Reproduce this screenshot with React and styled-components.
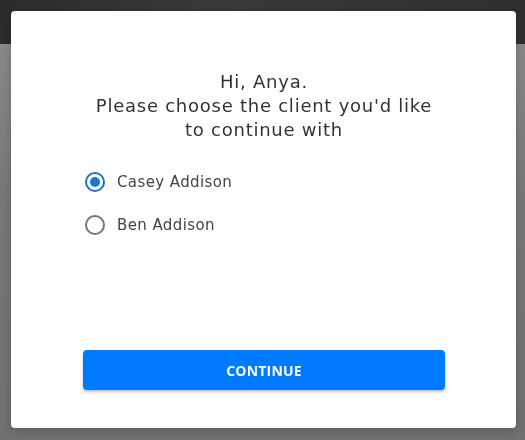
import React, { useState } from 'react';
import styled, { createGlobalStyle } from 'styled-components';

const GlobalStyle = createGlobalStyle`
  html, body {
    margin: 0;
    padding: 0;
    height: 100%;
  }

  body {
    font-family: 'DejaVu Sans', 'Open Sans', sans-serif;
    background: #7a7a7a;
  }
`;

const Page = styled.div`
  display: flex;
  flex-direction: column;
  min-height: 100vh;
`;

const TopBar = styled.header`
  height: 44px;
  background: linear-gradient(100deg, #2b2b2b 0%, #393939 40%, #2f2f2f 100%);
`;

const Backdrop = styled.main`
  flex: 1;
  background: linear-gradient(180deg, #888 0%, #777 40%, #707070 100%);
`;

const Overlay = styled.div`
  position: fixed;
  inset: 0;
  padding: 11px 9px 12px 11px;
  display: flex;
  align-items: flex-start;
  justify-content: center;
`;

const Modal = styled.section`
  width: 505px;
  height: 417px;
  box-sizing: border-box;
  background: #fff;
  border-radius: 4px;
  box-shadow: 0 2px 8px rgba(0, 0, 0, 0.2);
  padding: 59px 71px 38px 72px;
  display: flex;
  flex-direction: column;
`;

const Heading = styled.h2`
  margin: 0 -30px;
  font-size: 18px;
  font-weight: 400;
  line-height: 24px;
  letter-spacing: 0.75px;
  color: #333;
  text-align: center;
`;

const Options = styled.div`
  display: flex;
  flex-direction: column;
  gap: 19px;
  margin-top: 28px;
`;

const Option = styled.label`
  display: flex;
  align-items: center;
  gap: 12px;
  height: 24px;
  padding-left: 2px;
  cursor: pointer;
  font-size: 15px;
  letter-spacing: 0.4px;
  color: #444;
`;

const Radio = styled.span`
  box-sizing: border-box;
  width: 20px;
  height: 20px;
  border-radius: 50%;
  border: 2px solid ${({ $checked }) => ($checked ? '#1976d2' : '#757575')};
  display: grid;
  place-items: center;

  &::after {
    content: '';
    width: 10px;
    height: 10px;
    border-radius: 50%;
    background: #1976d2;
    transform: scale(${({ $checked }) => ($checked ? 1 : 0)});
  }
`;

const HiddenInput = styled.input`
  display: none;
`;

const Continue = styled.button`
  margin-top: auto;
  height: 40px;
  border: 0;
  border-radius: 4px;
  background: #007bff;
  color: #fff;
  font-family: 'Open Sans', sans-serif;
  font-size: 14px;
  font-weight: 700;
  letter-spacing: 0.2px;
  text-transform: uppercase;
  box-shadow: 0 2px 3px rgba(0, 0, 0, 0.25);
  cursor: pointer;
`;

const clients = ['Casey Addison', 'Ben Addison'];

const App = () => {
  const [selected, setSelected] = useState(clients[0]);

  return (
    <>
      <GlobalStyle />
      <Page>
        <TopBar />
        <Backdrop />
      </Page>
      <Overlay>
        <Modal>
          <Heading>
            Hi, Anya.
            <br />
            Please choose the client you'd like
            <br />
            to continue with
          </Heading>
          <Options>
            {clients.map((name) => (
              <Option key={name}>
                <HiddenInput
                  type="radio"
                  name="client"
                  checked={selected === name}
                  onChange={() => setSelected(name)}
                />
                <Radio $checked={selected === name} />
                {name}
              </Option>
            ))}
          </Options>
          <Continue>Continue</Continue>
        </Modal>
      </Overlay>
    </>
  );
};

export default App;
